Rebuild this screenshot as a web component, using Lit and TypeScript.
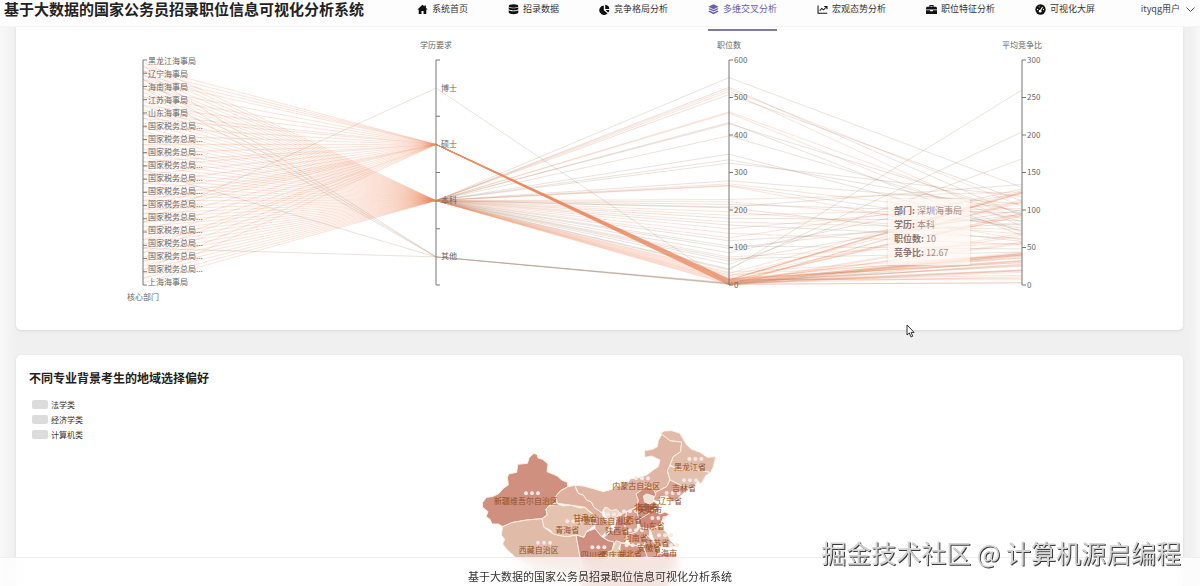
import { LitElement, html, svg, css } from 'lit';
import { customElement, property } from 'lit/decorators.js';
import { classMap } from 'lit/directives/class-map.js';

const SITE = '基于大数据的国家公务员招录职位信息可视化分析系统';

const ICONS: Record<string, unknown> = {
  home: svg`<path d="M8 1 0.5 8h2v6.5h4V10h3v4.5h4V8h2L13 5.600V2h-2v1.800z"/>`,
  data: svg`<ellipse cx="8" cy="3" rx="7" ry="2.500"/><path d="M1 4.700c3 2.200 11 2.200 14 0v3c-3 2.300-11 2.300-14 0zM1 9c3 2.200 11 2.200 14 0v3.500c-1 3.300-13 3.300-14 0z"/>`,
  pie: svg`<path d="M7 2v7l5.500 4.800A7 7 0 1 1 7 2z"/><path d="M9 1a6.500 6.500 0 0 1 6 6.300L9 7.200z"/><path d="M9.500 8.700H15a6 6 0 0 1-1.800 3.800z"/>`,
  layers: svg`<path d="M8 0.500 15.500 4 8 7.500.5 4z"/><path d="M2.500 6 8 8.700 13.500 6l2 1.200L8 11 .5 7.200z"/><path d="M2.500 9.600 8 12.300l5.500-2.700 2 1.200L8 14.900.5 10.800z"/>`,
  line: svg`<path d="M1.500 2v11.500H15M4 9.500l3-3 2.500 2L14 4M10.500 3.500h4v4" fill="none" stroke="currentColor" stroke-width="1.500"/>`,
  bag: svg`<path d="M5 4V1.500h6V4h3.500L16 5.500V8H0V5.500L1.500 4zM6.500 4h3V3h-3zM0 9h6v1.500h4V9h6v5.500H0z"/>`,
  gauge: svg`<circle cx="8" cy="8" r="7.500"/><path d="M7.500 10 11 4.500M3.500 9l.5-2M5.500 4.500l1-.7M12.500 9l-.3-2" stroke="#fff" stroke-width="1.500"/><circle cx="7.500" cy="10.500" r="2" fill="#fff"/>`,
};

const MENU = [
  { icon: 'home', label: '系统首页' },
  { icon: 'data', label: '招录数据' },
  { icon: 'pie', label: '竞争格局分析' },
  { icon: 'layers', label: '多维交叉分析', active: true },
  { icon: 'line', label: '宏观态势分析' },
  { icon: 'bag', label: '职位特征分析' },
  { icon: 'gauge', label: '可视化大屏' },
];

@customElement('app-nav')
class AppNav extends LitElement {
  static styles = css`
    :host {
      display: flex;
      align-items: flex-start;
      height: 27px;
      box-sizing: border-box;
      padding: 0 5px 0 4px;
      background: #fdfdfd;
      border-bottom: 1px solid #f5f5f5;
      line-height: 18px;
    }
    .brand {
      margin: 0;
      font-size: 15px;
      font-weight: 700;
      color: #222;
      white-space: nowrap;
    }
    nav {
      display: flex;
      gap: 40px;
      margin-left: 53px;
    }
    .item {
      position: relative;
      display: flex;
      align-items: center;
      gap: 4px;
      font-size: 9px;
      color: #333;
      text-decoration: none;
      white-space: nowrap;
    }
    .item svg {
      width: 11px;
      height: 11px;
      fill: #111;
      color: #111;
    }
    .active {
      color: #6a5fa8;
    }
    .active svg {
      fill: #6a5fa8;
    }
    .active::after {
      content: '';
      position: absolute;
      left: 0;
      right: 0;
      top: 29px;
      height: 2px;
      background: #7f7b9e;
    }
    .user {
      display: flex;
      align-items: center;
      gap: 6px;
      margin-left: auto;
      padding: 0;
      border: 0;
      background: none;
      font: inherit;
      font-size: 9px;
      line-height: 18px;
      color: #444;
      white-space: nowrap;
    }
    .user svg {
      width: 9px;
      height: 9px;
      fill: none;
      stroke: #555;
    }
  `;

  render() {
    return html`
      <h1 class="brand">${SITE}</h1>
      <nav>
        ${MENU.map(
          (m) => html`<a href="#" class=${classMap({ item: true, active: !!m.active })}>
            <svg viewBox="0 0 16 16">${ICONS[m.icon]}</svg>${m.label}
          </a>`
        )}
      </nav>
      <button class="user">
        ityqg用户<svg viewBox="0 0 9 9"><path d="M0.500 2.500 4.500 6.500 8.500 2.500" /></svg>
      </button>
    `;
  }
}

const TOP = 33;
const BOTTOM = 258;
const AXES = [127, 420, 713, 1006];

const DEPTS = ['黑龙江海事局', '辽宁海事局', '海南海事局', '江苏海事局', '山东海事局']
  .concat(Array(12).fill('国家税务总局...'))
  .concat('上海海事局');
const LEVELS = ['博士', '硕士', '本科', '其他'];

// [position count, ratio] of the bachelor rows, largest first
const BACHELOR = [
  [553, 130], [527, 92], [522, 105], [516, 78], [508, 112], [462, 88], [459, 70], [433, 66],
  [430, 95], [398, 84], [349, 72], [334, 98], [325, 118], [278, 108], [270, 90], [266, 76],
  [264, 60], [228, 124], [222, 80], [215, 96], [208, 134], [206, 58], [195, 68], [186, 102],
  [178, 86], [168, 74], [160, 62], [150, 110], [138, 54], [126, 122], [118, 82], [104, 48],
  [98, 94], [86, 128], [75, 56], [70, 44], [64, 100], [55, 168], [43, 204], [40, 260],
  [34, 40], [31, 122], [27, 36], [24, 110], [20, 92], [17, 30], [14, 124], [12, 13],
  [9, 33], [7, 20], [4, 11], [2, 3],
];

type Row = [number, number, number, number];

function buildRows(): Row[] {
  const rows: Row[] = BACHELOR.map(([n, r], i) => [(i * 19) % 52, 2, n, r]);
  for (let i = 0; i < 30; i++) {
    const ratio = [28, 41, 122, 17, 92, 38, 54, 5, 66, 35, 112, 24][i % 12] + (i % 5);
    rows.push([(i * 31 + 2) % 51, 1, (i * 7) % 17, ratio]);
  }
  rows.push([37, 0, 2, 42]);
  rows.push([2, 3, 3, 32], [4, 3, 6, 26], [6, 3, 2, 3], [25, 3, 4, 19], [43, 3, 4, 40]);
  return rows;
}

const ROWS = buildRows();

@customElement('parallel-chart')
class ParallelChart extends LitElement {
  static styles = css`
    :host {
      display: block;
      position: relative;
    }
    .chart {
      display: block;
      width: 100%;
    }
    .row {
      fill: none;
      stroke: #f08a62;
      stroke-opacity: 0.24;
    }
    .thin {
      stroke: #a8866c;
      stroke-opacity: 0.24;
    }
    .axis {
      fill: none;
      stroke: #777;
    }
    text {
      font-size: 8px;
      fill: #666;
      dominant-baseline: central;
    }
    .name {
      text-anchor: middle;
    }
    .tip {
      position: absolute;
      left: 872px;
      top: 172px;
      box-sizing: border-box;
      width: 82px;
      padding: 5px 6px;
      border-radius: 2px;
      background: rgba(255, 246, 243, 0.72);
      box-shadow: 0 0 3px rgba(190, 140, 120, 0.35);
      font-size: 9px;
      line-height: 14px;
      color: #a08a86;
      white-space: nowrap;
    }
    .tip b {
      color: #8c7470;
    }
  `;

  line([dept, level, count, ratio]: Row) {
    const h = BOTTOM - TOP;
    const ys = [
      TOP + ((dept + 0.5) / 52) * h,
      TOP + ((level + 0.5) / 4) * h,
      BOTTOM - (count / 600) * h,
      BOTTOM - (ratio / 300) * h,
    ];
    const points = ys.map((y, i) => `${AXES[i]},${y.toFixed(1)}`);
    const rare = level === 0 || level === 3;
    const thin = rare || (level === 2 && count > 35 && count % 3 !== 0);
    return svg`
      <polyline class=${classMap({ row: true, thin: rare })} points=${points.slice(0, 2).join(' ')} />
      <polyline class=${classMap({ row: true, thin })} points=${points.slice(1).join(' ')} />
    `;
  }

  axis(x: number, ticks: number) {
    const step = (BOTTOM - TOP) / ticks;
    let d = `M${x} ${TOP}V${BOTTOM}`;
    for (let i = 0; i <= ticks; i++) d += `M${x} ${TOP + i * step}h4`;
    return svg`<path class="axis" d=${d} />`;
  }

  scale(x: number, max: number, step: number) {
    const n = max / step;
    return Array.from({ length: n + 1 }, (_, i) =>
      svg`<text x=${x + 5} y=${TOP - 1 + ((BOTTOM - TOP) / n) * i}>${max - i * step}</text>`);
  }

  render() {
    return html`
      <svg class="chart" viewBox="0 0 1167 303">
        ${ROWS.map((r) => this.line(r))}
        ${this.axis(127, 17)} ${this.axis(420, 4)} ${this.axis(713, 6)} ${this.axis(1006, 6)}
        ${DEPTS.map((d, i) => svg`<text x="132" y=${33 + i * 13}>${d}</text>`)}
        ${LEVELS.map((l, i) => svg`<text x="425" y=${60 + i * 56}>${l}</text>`)}
        ${this.scale(713, 600, 100)} ${this.scale(1006, 300, 50)}
        <text class="name" x="127" y="269">核心部门</text>
        <text class="name" x="420" y="17">学历要求</text>
        <text class="name" x="713" y="17">职位数</text>
        <text class="name" x="1006" y="17">平均竞争比</text>
      </svg>
      <div class="tip">
        <div><b>部门:</b> 深圳海事局</div>
        <div><b>学历:</b> 本科</div>
        <div><b>职位数:</b> 10</div>
        <div><b>竞争比:</b> 12.67</div>
      </div>
    `;
  }
}

// [fill, outline]
const REGIONS = [
  ['#d99f90', '330 412 345 460 330 480 340 540 560 540 600 490 622 440 620 400 450 400'],
  ['#cf9080', '37 248 50 232 66 230 85 222 100 205 115 195 112 172 116 162 140 157 143 133 172 130 178 112 192 100 202 104 204 114 218 118 234 132 231 155 262 168 275 180 292 187 294 200 272 212 258 228 262 245 236 258 228 268 232 285 216 296 170 300 125 308 98 320 85 312 66 312 60 298 48 290 54 275 38 262'],
  ['#e0bba8', '98 320 125 308 170 300 216 296 222 322 250 342 290 350 318 345 325 380 330 412 330 460 290 470 200 450 140 415 112 390 98 372 104 358 94 345'],
  ['#e4c4b1', '236 258 262 252 280 258 300 255 330 264 345 262 358 275 372 285 380 300 375 315 350 335 342 352 318 345 290 350 270 347 250 342 240 330 222 322 216 296 232 285 228 268'],
  ['#dfb0a0', '294 200 315 196 320 212 325 220 340 225 350 240 364 246 372 262 395 278 405 300 430 290 432 310 420 320 408 335 395 350 375 330 375 315 380 300 372 285 345 262 300 255 262 250 258 228 272 212'],
  ['#dfb5a5', '315 196 340 198 370 206 400 215 425 208 440 200 470 192 482 176 500 175 530 165 550 150 565 140 570 120 545 108 525 112 523 92 548 88 562 80 565 62 578 38 600 62 635 66 632 95 610 110 600 135 592 155 600 180 590 200 560 215 540 232 510 240 500 262 470 275 440 290 420 270 405 262 395 278 372 262 364 246 350 240 340 225 325 220'],
  ['#e2bcaa', '572 40 582 33 605 32 618 36 630 40 640 58 650 75 665 88 690 97 712 112 737 110 730 140 722 158 690 150 650 152 625 148 600 135 610 110 632 95 635 66 600 62'],
  ['#e4c0ae', '592 150 600 138 625 148 650 152 690 150 722 158 708 166 700 180 692 192 684 182 672 200 650 208 630 195 600 180'],
  ['#d9a495', '540 232 560 215 590 200 600 180 630 195 655 208 635 225 610 245 598 240 592 228 572 230 565 245 548 240'],
  ['#d08f80', '500 262 505 240 498 222 512 212 525 200 548 205 558 222 548 240 562 252 545 270 530 300 505 300'],
  ['#efe2d6', '520 228 530 222 550 228 552 244 538 252 524 246'],
  ['#dba394', '470 275 500 262 505 300 500 335 470 345 463 310'],
  ['#ebd6c8', '400 270 410 262 424 272 440 268 450 280 440 292 424 312 412 300'],
  ['#d69a8c', '440 290 470 275 463 310 470 345 465 368 430 372 400 352 432 330 436 312'],
  ['#cf8a7c', '505 300 530 285 548 272 570 282 585 276 599 282 580 295 568 315 540 328 510 322'],
  ['#d9a293', '470 345 500 335 510 322 540 328 535 365 515 378 480 375'],
  ['#e0b8a8', '540 328 568 318 590 338 600 360 618 378 590 384 556 372'],
  ['#d8a090', '532 345 556 372 570 385 560 412 530 416 520 385'],
  ['#d59888', '450 368 480 375 520 380 532 410 500 418 450 412'],
  ['#cf8f80', '318 345 342 352 350 335 375 326 395 350 415 362 432 366 426 392 420 412 400 430 392 475 345 460 330 412'],
  ['#e3cdb6', '438 362 454 368 446 385 456 400 440 412 404 410 412 396 426 392'],
];

const PLACES: [string, number, number][] = [
  ['新疆维吾尔自治区', 168, 242], ['西藏自治区', 206, 389], ['青海省', 292, 327],
  ['甘肃省', 345, 293], ['宁夏回族自治区', 400, 301], ['内蒙古自治区', 499, 197],
  ['黑龙江省', 660, 140], ['吉林省', 642, 203], ['辽宁省', 600, 240],
  ['北京市', 528, 259], ['天津市', 540, 269], ['河北省', 532, 263], ['山西省', 480, 298],
  ['陕西省', 442, 332], ['山东省', 548, 317], ['河南省', 497, 353],
  ['江苏省', 562, 367], ['安徽省', 538, 383], ['上海市', 585, 397],
  ['湖北省', 480, 399], ['四川省', 368, 402], ['重庆市', 428, 403],
];

const MARKS = [
  [186, 220], [222, 368], [310, 304], [516, 175], [676, 117], [660, 181], [608, 219],
  [565, 294], [480, 274], [498, 331], [385, 382], [488, 376], [585, 346], [603, 376], [432, 283],
];

@customElement('china-map')
class ChinaMap extends LitElement {
  static styles = css`
    :host {
      display: flex;
      justify-content: center;
    }
    .map {
      width: 260px;
      height: 180px;
    }
    polygon {
      stroke: #fff1e4;
      stroke-width: 3px;
      stroke-linejoin: round;
    }
    circle {
      fill: #f7e8e6;
    }
    text {
      font-size: 24px;
      fill: #965022;
      text-anchor: middle;
      dominant-baseline: central;
    }
  `;

  render() {
    return html`
      <svg class="map" viewBox="0 0 780 540">
        ${REGIONS.map(([fill, points]) => svg`<polygon fill=${fill} points=${points} />`)}
        ${MARKS.map(([x, y]) => [-18, 0, 18].map((dx) => svg`<circle cx=${x + dx} cy=${y} r="6" />`))}
        ${PLACES.map(([name, x, y]) => svg`<text x=${x} y=${y}>${name}</text>`)}
      </svg>
    `;
  }
}

@customElement('app-root')
class AppRoot extends LitElement {
  @property({ type: Array }) majors = ['法学类', '经济学类', '计算机类'];

  static styles = css`
    :host {
      display: flex;
      flex-direction: column;
      position: relative;
      height: 100vh;
      overflow: hidden;
      background: linear-gradient(90deg, #f8f8f8, #f0f0f0 16px, #f0f0f0 calc(100% - 10px), #f8f8f8);
      font-family: 'Noto Sans CJK SC', sans-serif;
    }
    app-nav {
      flex: none;
      z-index: 1;
    }
    main {
      flex: 1;
      min-height: 0;
      display: flex;
      flex-direction: column;
      gap: 25px;
      padding: 0 17px 0 16px;
    }
    .card {
      flex: none;
      background: #fff;
      border-radius: 5px;
      box-shadow: 0 1px 3px rgba(0, 0, 0, 0.1);
    }
    .first {
      border-radius: 0 0 5px 5px;
    }
    .region {
      padding: 14px 13px 0;
    }
    h2 {
      margin: 0;
      font-size: 12px;
      line-height: 18px;
      font-weight: 700;
      color: #222;
    }
    .plot {
      display: grid;
      grid-template-areas: 'plot';
    }
    .plot > * {
      grid-area: plot;
    }
    .legend {
      display: flex;
      flex-direction: column;
      align-items: flex-start;
      justify-self: start;
      padding: 10px 0 0 3px;
    }
    .key {
      display: flex;
      align-items: center;
      gap: 3px;
      height: 15px;
      padding: 0;
      border: 0;
      background: none;
      font: inherit;
      font-size: 8px;
      color: #333;
    }
    .swatch {
      width: 16px;
      height: 9px;
      border-radius: 2px;
      background: #dcdcdc;
    }
    china-map {
      padding-top: 33px;
    }
    .pointer {
      position: absolute;
      left: 906px;
      top: 324px;
      width: 9px;
      height: 14px;
    }
    footer {
      position: absolute;
      left: 0;
      right: 0;
      bottom: 0;
      height: 29px;
      box-sizing: border-box;
      padding-top: 9px;
      border-top: 1px solid #eee;
      background: rgba(255, 255, 255, 0.72);
      backdrop-filter: blur(8px);
      font-size: 11px;
      line-height: 18px;
      text-align: center;
      color: #333;
    }
    .mark {
      position: absolute;
      right: 19px;
      bottom: 16px;
      font-size: 25px;
      line-height: 36px;
      color: #d4d4d4;
      text-shadow: 1px 1px 0 #3a3a3a;
      white-space: nowrap;
    }
  `;

  render() {
    return html`
      <app-nav></app-nav>
      <main>
        <section class="card first"><parallel-chart></parallel-chart></section>
        <section class="card region">
          <h2>不同专业背景考生的地域选择偏好</h2>
          <div class="plot">
            <china-map></china-map>
            <div class="legend">
              ${this.majors.map((m) => html`<button class="key"><span class="swatch"></span>${m}</button>`)}
            </div>
          </div>
        </section>
      </main>
      <footer>${SITE}</footer>
      <div class="mark">掘金技术社区 @ 计算机源启编程</div>
      <svg class="pointer" viewBox="0 0 9 14">
        <path d="M1 1v10l2.300-2 1.700 4 1.700-.8-1.600-3.800h3z" fill="#fff" stroke="#333" />
      </svg>
    `;
  }
}
